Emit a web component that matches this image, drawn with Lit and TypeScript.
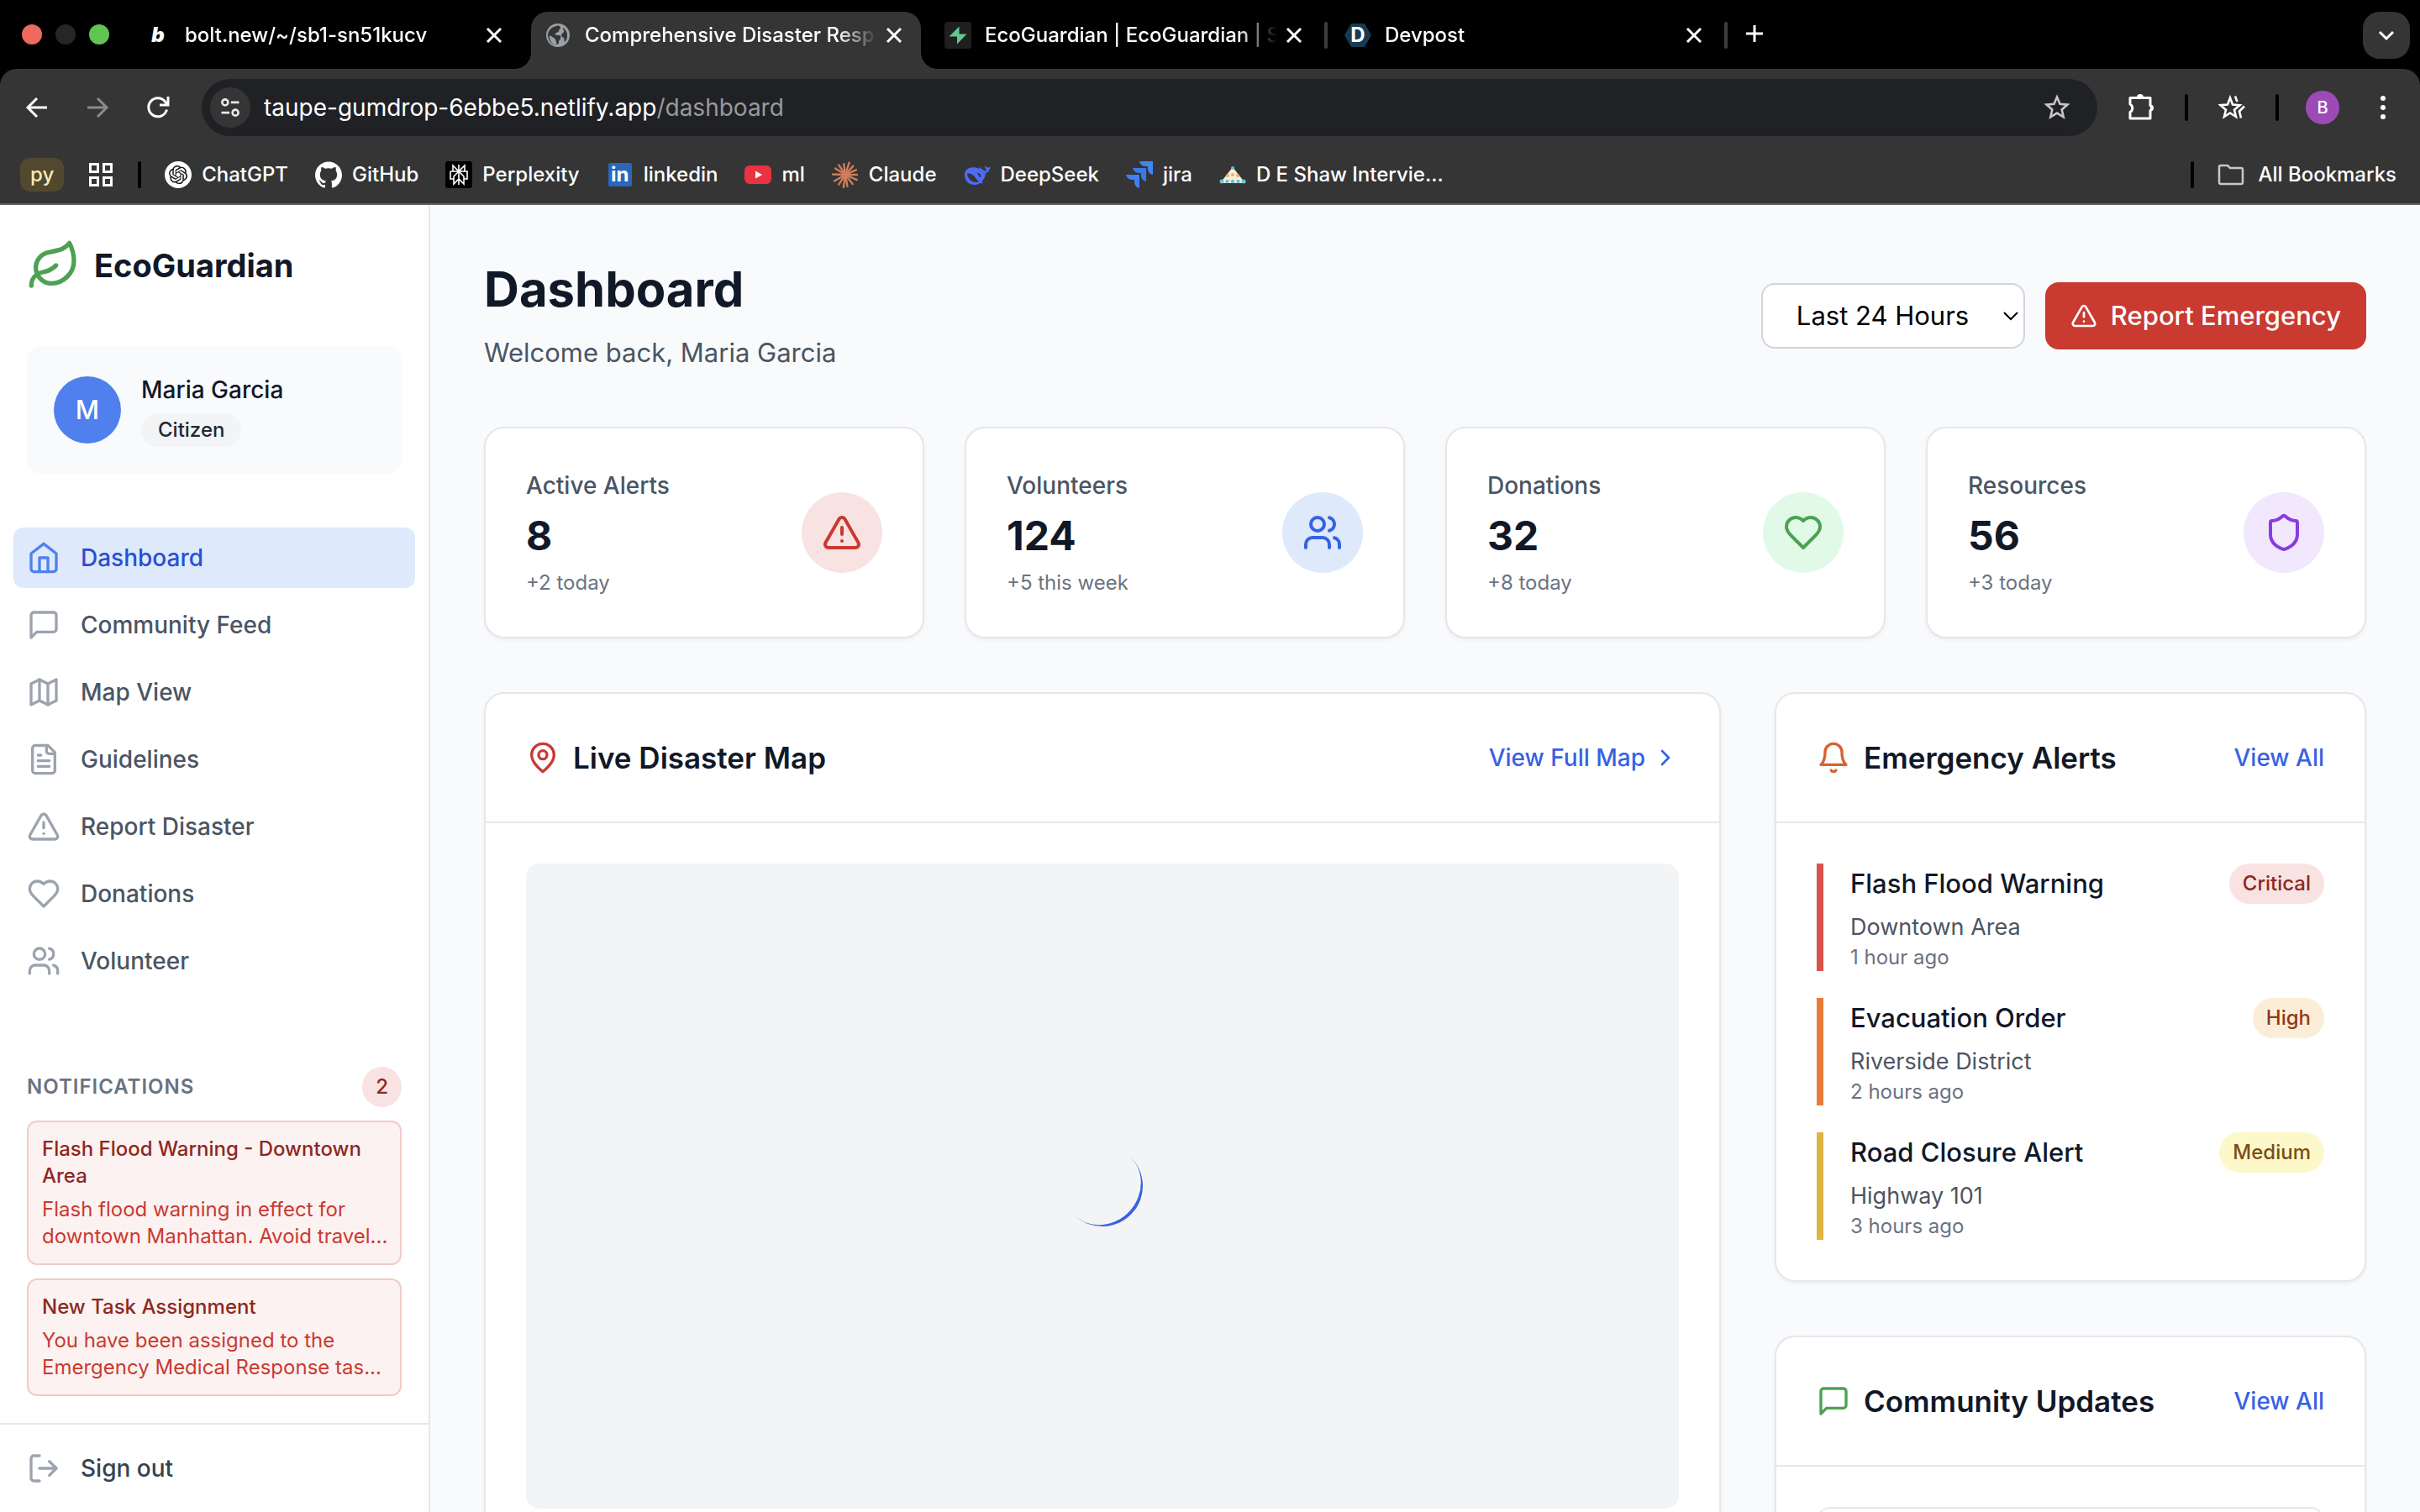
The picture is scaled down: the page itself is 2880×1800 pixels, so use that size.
import { LitElement, html, svg, css, nothing, type TemplateResult } from "lit";
import { customElement, property } from "lit/decorators.js";
import { classMap } from "lit/directives/class-map.js";

/* ---------- shared styles ---------- */

const base = css`
  :host,
  *,
  *::before,
  *::after {
    box-sizing: border-box;
  }
  h1,
  h2,
  h3,
  p,
  ul {
    margin: 0;
    padding: 0;
  }
  ul {
    list-style: none;
  }
  a {
    color: inherit;
    text-decoration: none;
  }
  button,
  input,
  select {
    margin: 0;
    padding: 0;
    border: 0;
    background: none;
    color: inherit;
    font: inherit;
  }
  button,
  select {
    cursor: pointer;
  }
`;

/* ---------- outline icons on a 24 unit grid ---------- */

const outlines: Record<string, TemplateResult> = {
  leaf: svg`<path d="M11 20A7 7 0 0 1 9.8 6.1C15.5 5 17 4.48 19 2c1 2 2 4.18 2 8 0 5.5-4.78 10-10 10Z"/><path d="M2 21c0-3 1.85-5.36 5.08-6C9.5 14.52 12 13 13 12"/>`,
  home: svg`<path d="m3 9 9-7 9 7v11a2 2 0 0 1-2 2H5a2 2 0 0 1-2-2z"/><path d="M9 22V12h6v10"/>`,
  message: svg`<path d="M21 15a2 2 0 0 1-2 2H7l-4 4V5a2 2 0 0 1 2-2h14a2 2 0 0 1 2 2z"/>`,
  map: svg`<path d="M3 6l6-3 6 3 6-3v15l-6 3-6-3-6 3z"/><path d="M9 3v15"/><path d="M15 6v15"/>`,
  file: svg`<path d="M15 2H6a2 2 0 0 0-2 2v16a2 2 0 0 0 2 2h12a2 2 0 0 0 2-2V7Z"/><path d="M14 2v4a2 2 0 0 0 2 2h4"/><path d="M10 9H8"/><path d="M16 13H8"/><path d="M16 17H8"/>`,
  alert: svg`<path d="m21.73 18-8-14a2 2 0 0 0-3.48 0l-8 14A2 2 0 0 0 4 21h16a2 2 0 0 0 1.73-3"/><path d="M12 9v4"/><path d="M12 17h.01"/>`,
  heart: svg`<path d="M19 14c1.49-1.46 3-3.21 3-5.5A5.5 5.5 0 0 0 16.5 3c-1.76 0-3 .5-4.5 2-1.5-1.5-2.74-2-4.5-2A5.5 5.5 0 0 0 2 8.5c0 2.3 1.5 4.05 3 5.5l7 7Z"/>`,
  users: svg`<path d="M16 21v-2a4 4 0 0 0-4-4H6a4 4 0 0 0-4 4v2"/><circle cx="9" cy="7" r="4"/><path d="M22 21v-2a4 4 0 0 0-3-3.87"/><path d="M16 3.13a4 4 0 0 1 0 7.75"/>`,
  logout: svg`<path d="M9 21H5a2 2 0 0 1-2-2V5a2 2 0 0 1 2-2h4"/><path d="m16 17 5-5-5-5"/><path d="M21 12H9"/>`,
  shield: svg`<path d="M20 13c0 5-3.5 7.5-7.66 8.95a1 1 0 0 1-.67-.01C7.5 20.5 4 18 4 13V6a1 1 0 0 1 1-1c2 0 4.5-1.2 6.24-2.72a1.17 1.17 0 0 1 1.52 0C14.51 3.81 17 5 19 5a1 1 0 0 1 1 1z"/>`,
  pin: svg`<path d="M20 10c0 6-8 12-8 12s-8-6-8-12a8 8 0 0 1 16 0Z"/><circle cx="12" cy="10" r="3"/>`,
  bell: svg`<path d="M6 8a6 6 0 0 1 12 0c0 7 3 9 3 9H3s3-2 3-9"/><path d="M10.3 21a1.94 1.94 0 0 0 3.4 0"/>`,
  chevron: svg`<path d="m9 18 6-6-6-6"/>`,
};

@customElement("line-icon")
export class LineIcon extends LitElement {
  @property() name = "";

  static styles = css`
    :host {
      display: block;
      flex: none;
      width: 40px;
      height: 40px;
    }
    svg {
      display: block;
      width: 100%;
      height: 100%;
      fill: none;
      stroke: currentColor;
      stroke-width: 2;
      stroke-linecap: round;
      stroke-linejoin: round;
    }
  `;

  render() {
    return html`<svg viewBox="0 0 24 24" aria-hidden="true">${outlines[this.name] ?? nothing}</svg>`;
  }
}

/* ---------- site logos on a 32 unit grid ---------- */

const rays = [
  [0, 14], [24, 15], [52, 14], [80, 14], [98, 15], [124, 14], [150, 15],
  [182, 15], [212, 14], [236, 14], [262, 13], [288, 15], [312, 14], [336, 14],
];

const logos: Record<string, TemplateResult> = {
  globe: svg`<circle cx="16" cy="16" r="14" fill="#9aa0a6"/>
    <path fill="#353535" d="M14 5c3-1 5 0 5 2s-2 2-2 4-3 1-4 3 2 2 4 2 3 2 2 4-2 2-2 4-1 3-2 3-1-4-2-6-4-3-7-5c-1 7 4 12 10 12C8 28 4 22 4 15c1-6 5-9 10-10z"/>
    <path fill="#353535" d="M22 7c3 2 5 5 5 9s-1 6-3 8c-1-2 0-4-1-5s-3-1-3-3 2-2 3-4-2-3-1-5z"/>`,
  supabase: svg`<rect width="32" height="32" rx="4" fill="#1f1f1f"/><path fill="#64c68e" d="M17.500 5.500v9H26.500L15 26.500v-9H5.500z"/>`,
  hexagon: svg`<path fill="#173a52" d="M8 2h16l8 14-8 14H8L0 16z"/>`,
  openai: svg`<circle cx="16" cy="16" r="16" fill="#fff"/><path transform="translate(5 5) scale(.92)" fill="#111" d="M22.2819 9.8211a5.9847 5.9847 0 0 0-.5157-4.9108 6.0462 6.0462 0 0 0-6.5098-2.9A6.0651 6.0651 0 0 0 4.9807 4.1818a5.9847 5.9847 0 0 0-3.9977 2.9 6.0462 6.0462 0 0 0 .7427 7.0966 5.98 5.98 0 0 0 .511 4.9107 6.051 6.051 0 0 0 6.5146 2.9001A5.9847 5.9847 0 0 0 13.2599 24a6.0557 6.0557 0 0 0 5.7718-4.2058 5.9894 5.9894 0 0 0 3.9977-2.9001 6.0557 6.0557 0 0 0-.7475-7.0729zm-9.022 12.6081a4.4755 4.4755 0 0 1-2.8764-1.0408l.1419-.0804 4.7783-2.7582a.7948.7948 0 0 0 .3927-.6813v-6.7369l2.02 1.1686a.071.071 0 0 1 .038.052v5.5826a4.504 4.504 0 0 1-4.4945 4.4944zm-9.6607-4.1254a4.4708 4.4708 0 0 1-.5346-3.0137l.142.0852 4.783 2.7582a.7712.7712 0 0 0 .7806 0l5.8428-3.3685v2.3324a.0804.0804 0 0 1-.0332.0615L9.74 19.9502a4.4992 4.4992 0 0 1-6.1408-1.6464zM2.3408 7.8956a4.485 4.485 0 0 1 2.3655-1.9728V11.6a.7664.7664 0 0 0 .3879.6765l5.8144 3.3543-2.0201 1.1685a.0757.0757 0 0 1-.071 0l-4.8303-2.7865A4.504 4.504 0 0 1 2.3408 7.872zm16.5963 3.8558L13.1038 8.364 15.1192 7.2a.0757.0757 0 0 1 .071 0l4.8303 2.7913a4.4944 4.4944 0 0 1-.6765 8.1042v-5.6772a.79.79 0 0 0-.407-.667zm2.0107-3.0231l-.142-.0852-4.7735-2.7818a.7759.7759 0 0 0-.7854 0L9.409 9.2297V6.8974a.0662.0662 0 0 1 .0284-.0615l4.8303-2.7866a4.4992 4.4992 0 0 1 6.6802 4.66zM8.3065 12.863l-2.02-1.1638a.0804.0804 0 0 1-.038-.0567V6.0742a4.4992 4.4992 0 0 1 7.3757-3.4537l-.142.0805L8.704 5.459a.7948.7948 0 0 0-.3927.6813zm1.0976-2.3654l2.602-1.4998 2.6069 1.4998v2.9994l-2.5974 1.4997-2.6067-1.4997Z"/>`,
  github: svg`<path transform="scale(1.3333)" fill="#fff" d="M12 .297c-6.63 0-12 5.373-12 12 0 5.303 3.438 9.8 8.205 11.385.6.113.82-.258.82-.577 0-.285-.01-1.04-.015-2.04-3.338.724-4.042-1.61-4.042-1.61C4.422 18.07 3.633 17.7 3.633 17.7c-1.087-.744.084-.729.084-.729 1.205.084 1.838 1.236 1.838 1.236 1.07 1.835 2.809 1.305 3.495.998.108-.776.417-1.305.76-1.605-2.665-.3-5.466-1.332-5.466-5.93 0-1.31.465-2.38 1.235-3.22-.135-.303-.54-1.523.105-3.176 0 0 1.005-.322 3.3 1.23.96-.267 1.98-.399 3-.405 1.02.006 2.04.138 3 .405 2.28-1.552 3.285-1.23 3.285-1.23.645 1.653.24 2.873.12 3.176.765.84 1.23 1.91 1.23 3.22 0 4.61-2.805 5.625-5.475 5.92.42.36.81 1.096.81 2.22 0 1.606-.015 2.896-.015 3.286 0 .315.21.69.825.57C20.565 22.092 24 17.592 24 12.297c0-6.627-5.373-12-12-12"/>`,
  perplexity: svg`<rect width="32" height="32" rx="3" fill="#000"/><g fill="none" stroke="#fff" stroke-width="1.6"><path d="M16 4v24M9 5l7 7 7-7v7H9zM6 12h20v9h-4M10 21H6v-9M16 12l-6 6v9l6-6 6 6v-9z"/></g>`,
  linkedin: svg`<rect x="2" y="2" width="28" height="28" rx="2" fill="#2a66bc"/>`,
  youtube: svg`<rect y="5" width="32" height="22" rx="6" fill="#ea3340"/><path d="M13 11.500v9l8-4.500z" fill="#fff"/>`,
  claude: svg`<g stroke="#cf7c5e" stroke-width="2.400" stroke-linecap="round">${rays.map(
    ([deg, len]) => svg`<path d="M16 16h${len}" transform="rotate(${deg} 16 16)"/>`,
  )}</g>`,
  deepseek: svg`<path fill="#4f6bf6" d="M31.500 6.500c-.500-.3-1 .6-2.200.9-1.600.3-2.600-.6-3.300-1.800-.4-.7-.5 0-.6 1.100-.1 1.500.6 2.900 1.700 3.700-1 1.500-2.600 1.200-4.500-.3-1.900-1.500-2.600-1.700-3.600-3.400-.7.800-.300 1.800-.2 2.500C11.500 5.500 1 7 1 16.500 1 23.500 6.500 28 12.500 28c3.200 0 5-.8 7-2.200 1.100.700 2.500.6 3.700.2-.4-.9-1.200-1.100-1.900-1.700 2.700-2.700 4.300-6.300 4.600-10.300 3-.4 5.100-3.300 5.600-7.500z"/><path fill="#353535" d="M4 14.500c4-.5 7 1 9.500 4.500 1.500 2.200 2.500 4 4.500 5-5 2.500-13.500-.5-14-9.500z"/><path fill="#353535" d="M15.500 13.500c3 .3 5 2 5 4.500l-1.500 1.500c-1-2.500-2-4-3.500-6z"/>`,
  jira: svg`<path fill="#4385f6" d="M16 0h16v16a7 7 0 0 1-6-7V6h-3a7 7 0 0 1-7-6z"/><path fill="#3a78ea" d="M8 8h16v16a7 7 0 0 1-6-7v-3h-3a7 7 0 0 1-7-6z"/><path fill="#3f80f3" d="M0 16h16v16a7 7 0 0 1-6-7v-3H7a7 7 0 0 1-7-6z"/>`,
  pyramid: svg`<path d="M16 7 31 26H1z" fill="#f4efe2"/><g fill="#6fc4c9"><circle cx="16" cy="8" r="2"/><circle cx="3" cy="24" r="2.500"/><circle cx="9.500" cy="24" r="2.200"/><circle cx="16" cy="24" r="2.200"/><circle cx="22.500" cy="24" r="2.200"/><circle cx="29" cy="24" r="2.500"/></g><g fill="#eeae5a"><circle cx="10" cy="17" r="2"/><circle cx="16" cy="16" r="2"/><circle cx="22" cy="17" r="2"/></g>`,
  grid: svg`<g fill="none" stroke="#fff" stroke-width="3"><path d="M3.500 3.500h9v9h-9zM19.500 3.500h9v9h-9zM3.500 19.500h9v9h-9zM19.500 19.500h9v9h-9z"/></g>`,
  folder: svg`<path d="M2 7a2 2 0 0 1 2-2h8l3 3h13a2 2 0 0 1 2 2v15a2 2 0 0 1-2 2H4a2 2 0 0 1-2-2z" fill="none" stroke="#c7c7c7" stroke-width="2.500"/>`,
  back: svg`<path d="M28 16H5M16 5 5 16l11 11" fill="none" stroke="currentColor" stroke-width="3"/>`,
  forward: svg`<path d="M4 16h23M16 5l11 11-11 11" fill="none" stroke="currentColor" stroke-width="3"/>`,
  reload: svg`<path d="M26.500 18.500A11 11 0 1 1 24.500 9L27 12" fill="none" stroke="#fff" stroke-width="3"/><path d="M28 3v10H18" fill="none" stroke="#fff" stroke-width="3"/>`,
  tune: svg`<g fill="none" stroke="#e8e8e8" stroke-width="3"><circle cx="9" cy="9" r="4"/><path d="M17 9h11M4 23h11"/><circle cx="23" cy="23" r="4"/></g>`,
  star: svg`<path d="m16 3.500 3.500 8.300 9 .8-6.800 5.900 2 8.800L16 22.600l-7.700 4.700 2-8.800-6.800-5.900 9-.8z" fill="none" stroke="#c7c7c7" stroke-width="2.600"/>`,
  puzzle: svg`<path d="M3 4.500h24v9a3.500 3.500 0 0 1 0 6v9.500H3v-7.500a5.500 5.500 0 0 0 0-9.500z" fill="none" stroke="#fff" stroke-width="3" stroke-linejoin="round"/><path d="M11 4a4 4 0 0 1 8 0zM27 12.500a4 4 0 0 1 0 8z" fill="#fff"/>`,
  starlines: svg`<g fill="none" stroke="#fff" stroke-width="2.600"><path d="m14 4.500 3 8 8.500.7-6.500 5.500 2 8.300-7-4.500L7 27l2-8.300-6.500-5.500 8.500-.7z"/><path d="M20 2.500 22.500 9M31 14.500l-6 6 2 8"/></g>`,
  close: svg`<path d="m8 8 16 16M24 8 8 24" fill="none" stroke="#fff" stroke-width="3"/>`,
  plus: svg`<path d="M16 6v20M6 16h20" fill="none" stroke="#fff" stroke-width="3"/>`,
  down: svg`<path d="m8 12 8 8 8-8" fill="none" stroke="currentColor" stroke-width="3"/>`,
  dots: svg`<g fill="#fff"><circle cx="16" cy="5" r="3"/><circle cx="16" cy="16" r="3"/><circle cx="16" cy="27" r="3"/></g>`,
};

@customElement("site-logo")
export class SiteLogo extends LitElement {
  @property() name = "";
  @property() mark = "";

  static styles = css`
    :host {
      display: grid;
      flex: none;
      place-items: center;
      width: 32px;
      height: 32px;
    }
    svg,
    .mark {
      grid-area: 1 / 1;
    }
    svg {
      display: block;
      width: 100%;
      height: 100%;
    }
    .mark {
      z-index: 1;
      color: #fff;
      font: 700 24px/28px Inter, sans-serif;
    }
    .italic {
      font-weight: 900;
      font-style: italic;
    }
  `;

  render() {
    const shape = logos[this.name];
    return html`
      ${shape ? html`<svg viewBox="0 0 32 32" aria-hidden="true">${shape}</svg>` : nothing}
      ${this.mark
        ? html`<span class=${classMap({ mark: true, italic: !shape })}>${this.mark}</span>`
        : nothing}
    `;
  }
}

/* ---------- browser frame ---------- */

interface Tab {
  title: string;
  logo: string;
  mark?: string;
  active?: boolean;
  divided?: boolean;
}

const tabs: Tab[] = [
  { title: "bolt.new/~/sb1-sn51kucv", logo: "", mark: "b" },
  { title: "Comprehensive Disaster Resp", logo: "globe", active: true },
  { title: "EcoGuardian | EcoGuardian | S", logo: "supabase", divided: true },
  { title: "Devpost", logo: "hexagon", mark: "D", divided: true },
];

const bookmarks = [
  { title: "ChatGPT", logo: "openai" },
  { title: "GitHub", logo: "github" },
  { title: "Perplexity", logo: "perplexity" },
  { title: "linkedin", logo: "linkedin", mark: "in" },
  { title: "ml", logo: "youtube" },
  { title: "Claude", logo: "claude" },
  { title: "DeepSeek", logo: "deepseek" },
  { title: "jira", logo: "jira" },
  { title: "D E Shaw Intervie...", logo: "pyramid" },
];

@customElement("browser-frame")
export class BrowserFrame extends LitElement {
  static styles = [
    base,
    css`
      :host {
        display: block;
        background: #000;
        color: #fff;
        font: 450 24px/32px Inter, "Liberation Sans", sans-serif;
      }
      .strip {
        display: flex;
        align-items: flex-end;
        height: 82px;
        padding: 14px 12px 0 26px;
      }
      .lights {
        display: flex;
        gap: 16px;
        align-self: center;
        width: 130px;
        padding-bottom: 14px;
      }
      .light {
        width: 24px;
        height: 24px;
        border-radius: 50%;
        background: #262626;
      }
      .light.red {
        background: #ec6a5e;
      }
      .light.green {
        background: #61c554;
      }
      .tabs {
        display: flex;
        gap: 12px;
      }
      .tab {
        position: relative;
        display: flex;
        align-items: center;
        gap: 16px;
        width: 464px;
        height: 68px;
        padding: 0 16px 12px;
      }
      .tab.active {
        border-radius: 20px 20px 0 0;
        background: #353535;
      }
      .tab.active::before,
      .tab.active::after {
        content: "";
        position: absolute;
        bottom: 0;
        width: 20px;
        height: 20px;
      }
      .tab.active::before {
        right: 100%;
        background: radial-gradient(circle at 0 0, transparent 20px, #353535 20px);
      }
      .tab.active::after {
        left: 100%;
        background: radial-gradient(circle at 100% 0, transparent 20px, #353535 20px);
      }
      .tab.divided::after {
        content: "";
        position: absolute;
        top: 12px;
        left: 100%;
        width: 4px;
        height: 32px;
        margin-left: 4px;
        border-radius: 2px;
        background: #3c3c3c;
      }
      .title {
        flex: 1;
        margin-right: -12px;
        overflow: hidden;
        white-space: nowrap;
        -webkit-mask-image: linear-gradient(to left, transparent, #000 48px);
        mask-image: linear-gradient(to left, transparent, #000 48px);
      }
      .icon-button {
        display: grid;
        flex: none;
        place-items: center;
        width: 32px;
        height: 32px;
      }
      .new-tab {
        margin: 0 auto 26px 24px;
      }
      .search-tabs {
        width: 56px;
        height: 56px;
        margin-bottom: 12px;
        border-radius: 20px;
        background: #353535;
      }
      .toolbar {
        display: flex;
        align-items: center;
        gap: 40px;
        padding: 12px 28px;
        border-radius: 20px 20px 0 0;
        background: #353535;
      }
      .dim {
        color: #8a8a8a;
      }
      .address {
        display: flex;
        flex: 1;
        align-items: center;
        height: 68px;
        margin-left: -4px;
        padding: 0 32px 0 10px;
        border-radius: 34px;
        background: #202125;
        font-size: 28px;
        line-height: 40px;
        font-weight: 400;
      }
      .tune {
        width: 48px;
        height: 48px;
        margin-right: 16px;
        border-radius: 50%;
        background: #353535;
      }
      .tune site-logo {
        width: 28px;
        height: 28px;
      }
      .address input {
        field-sizing: content;
        outline: 0;
      }
      .path {
        flex: 1;
        color: #9a9a9a;
      }
      .rule {
        flex: none;
        width: 4px;
        height: 32px;
        border-radius: 2px;
        background: #000;
      }
      .tools {
        display: flex;
        align-items: center;
        gap: 36px;
        margin-left: -4px;
      }
      .avatar {
        width: 40px;
        height: 40px;
        margin-left: -4px;
        border-radius: 50%;
        background: #9c4bb6;
        font-size: 20px;
      }
      .bookmarks {
        display: flex;
        align-items: center;
        gap: 28px;
        height: 70px;
        padding: 0 28px 0 24px;
        border-bottom: 2px solid #636163;
        background: #353535;
      }
      .group {
        padding: 4px 12px;
        border-radius: 12px;
        background: #51482f;
        color: #fbe9b4;
      }
      .sites {
        display: flex;
        gap: 32px;
      }
      .bookmark {
        display: flex;
        align-items: center;
        gap: 12px;
        white-space: nowrap;
      }
      .all {
        gap: 16px;
      }
      .push {
        margin-left: auto;
      }
    `,
  ];

  render() {
    return html`
      <div class="strip">
        <div class="lights">
          <span class="light red"></span><span class="light"></span><span class="light green"></span>
        </div>
        <div class="tabs">
          ${tabs.map(
            (t) => html`
              <div class=${classMap({ tab: true, active: !!t.active, divided: !!t.divided })}>
                <site-logo name=${t.logo} mark=${t.mark ?? ""}></site-logo>
                <span class="title">${t.title}</span>
                <button class="icon-button" aria-label="Close tab"><site-logo name="close"></site-logo></button>
              </div>
            `,
          )}
        </div>
        <button class="icon-button new-tab" aria-label="New tab"><site-logo name="plus"></site-logo></button>
        <button class="icon-button search-tabs" aria-label="Search tabs"><site-logo name="down"></site-logo></button>
      </div>
      <div class="toolbar">
        <button class="icon-button" aria-label="Back"><site-logo name="back"></site-logo></button>
        <button class="icon-button dim" aria-label="Forward"><site-logo name="forward"></site-logo></button>
        <button class="icon-button" aria-label="Reload"><site-logo name="reload"></site-logo></button>
        <div class="address">
          <button class="icon-button tune" aria-label="Site information"><site-logo name="tune"></site-logo></button>
          <input type="text" aria-label="Address" .value=${"taupe-gumdrop-6ebbe5.netlify.app"} />
          <span class="path">/dashboard</span>
          <button class="icon-button" aria-label="Bookmark this page"><site-logo name="star"></site-logo></button>
        </div>
        <div class="tools">
          <button class="icon-button" aria-label="Extensions"><site-logo name="puzzle"></site-logo></button>
          <span class="rule"></span>
          <button class="icon-button" aria-label="Favourites"><site-logo name="starlines"></site-logo></button>
          <span class="rule"></span>
          <button class="icon-button avatar" aria-label="Profile">B</button>
          <button class="icon-button" aria-label="Menu"><site-logo name="dots"></site-logo></button>
        </div>
      </div>
      <nav class="bookmarks" aria-label="Bookmarks">
        <button class="group">py</button>
        <button class="icon-button" aria-label="Apps"><site-logo name="grid"></site-logo></button>
        <span class="rule"></span>
        <div class="sites">
          ${bookmarks.map(
            (b) => html`
              <a class="bookmark" href="#"><site-logo name=${b.logo} mark=${b.mark ?? ""}></site-logo>${b.title}</a>
            `,
          )}
        </div>
        <span class="rule push"></span>
        <a class="bookmark all" href="#"><site-logo name="folder"></site-logo>All Bookmarks</a>
      </nav>
    `;
  }
}

/* ---------- sidebar ---------- */

const links = [
  { label: "Dashboard", icon: "home", active: true },
  { label: "Community Feed", icon: "message" },
  { label: "Map View", icon: "map" },
  { label: "Guidelines", icon: "file" },
  { label: "Report Disaster", icon: "alert" },
  { label: "Donations", icon: "heart" },
  { label: "Volunteer", icon: "users" },
];

const notices = [
  {
    title: "Flash Flood Warning - Downtown Area",
    body: "Flash flood warning in effect for downtown Manhattan. Avoid travel...",
  },
  {
    title: "New Task Assignment",
    body: "You have been assigned to the Emergency Medical Response tas...",
  },
];

@customElement("side-bar")
export class SideBar extends LitElement {
  static styles = [
    base,
    css`
      :host {
        display: flex;
        flex: none;
        flex-direction: column;
        width: 512px;
        border-right: 2px solid #e5e7eb;
        background: #fff;
        color: #111827;
        font: 500 28px/40px Inter, "Liberation Sans", sans-serif;
      }
      .brand {
        display: flex;
        align-items: center;
        gap: 16px;
        padding: 40px 32px 64px;
        font-size: 38px;
        line-height: 64px;
        font-weight: 700;
      }
      .brand line-icon {
        width: 64px;
        height: 64px;
        color: #4da153;
      }
      .user {
        display: flex;
        align-items: center;
        gap: 24px;
        margin: 0 32px 64px;
        padding: 32px;
        border-radius: 16px;
        background: #f9fafc;
      }
      .avatar {
        display: grid;
        place-items: center;
        width: 80px;
        height: 80px;
        border-radius: 50%;
        background: #4f80ee;
        color: #fff;
        font-size: 31px;
      }
      .who {
        display: flex;
        flex-direction: column;
        align-items: flex-start;
        gap: 8px;
      }
      .role {
        padding: 4px 20px;
        border-radius: 20px;
        background: #f3f4f6;
        color: #1f2937;
        font-size: 24px;
        line-height: 32px;
      }
      .links {
        display: flex;
        flex-direction: column;
        gap: 8px;
        padding: 0 16px;
        color: #4b5563;
      }
      .link {
        display: flex;
        align-items: center;
        gap: 24px;
        padding: 16px;
        border-radius: 12px;
      }
      line-icon {
        color: #9ca3af;
      }
      .link.active {
        background: #dee9fb;
        color: #2a4fcf;
      }
      .link.active line-icon {
        color: #4f80ee;
      }
      .notices {
        display: flex;
        flex-direction: column;
        gap: 16px;
        margin-top: auto;
        padding: 0 32px 32px;
        font-size: 24px;
        line-height: 32px;
      }
      .heading {
        display: flex;
        align-items: center;
        justify-content: space-between;
      }
      .heading h2 {
        color: #6b7280;
        font-size: 24px;
        font-weight: 600;
        letter-spacing: 1px;
      }
      .count {
        padding: 8px 16px;
        border-radius: 24px;
        background: #f8e3e2;
        color: #8c2822;
      }
      .notice {
        display: flex;
        flex-direction: column;
        gap: 8px;
        padding: 16px 12px 16px 16px;
        border: 2px solid #f4cac8;
        border-radius: 12px;
        background: #fcf2f1;
        color: #8c2822;
      }
      .notice h3 {
        font: inherit;
      }
      .notice p {
        color: #c93a31;
        font-weight: 400;
      }
      .footer {
        padding: 32px 16px;
        border-top: 2px solid #e5e7eb;
      }
      .sign-out {
        display: flex;
        align-items: center;
        gap: 24px;
        width: 100%;
        padding: 0 16px;
        color: #374151;
      }
    `,
  ];

  render() {
    return html`
      <a class="brand" href="#"><line-icon name="leaf"></line-icon>EcoGuardian</a>
      <section class="user">
        <span class="avatar">M</span>
        <div class="who">
          <span>Maria Garcia</span>
          <span class="role">Citizen</span>
        </div>
      </section>
      <nav class="links">
        ${links.map(
          (l) => html`
            <a class=${classMap({ link: true, active: !!l.active })} href="#">
              <line-icon name=${l.icon}></line-icon>${l.label}
            </a>
          `,
        )}
      </nav>
      <section class="notices">
        <div class="heading">
          <h2>NOTIFICATIONS</h2>
          <span class="count">${notices.length}</span>
        </div>
        ${notices.map(
          (n) => html`
            <article class="notice">
              <h3>${n.title}</h3>
              <p>${n.body}</p>
            </article>
          `,
        )}
      </section>
      <div class="footer">
        <button class="sign-out"><line-icon name="logout"></line-icon>Sign out</button>
      </div>
    `;
  }
}

/* ---------- dashboard ---------- */

const stats = [
  { label: "Active Alerts", value: "8", note: "+2 today", icon: "alert", tone: "red" },
  { label: "Volunteers", value: "124", note: "+5 this week", icon: "users", tone: "blue" },
  { label: "Donations", value: "32", note: "+8 today", icon: "heart", tone: "green" },
  { label: "Resources", value: "56", note: "+3 today", icon: "shield", tone: "purple" },
];

const alerts = [
  { title: "Flash Flood Warning", place: "Downtown Area", time: "1 hour ago", level: "Critical" },
  { title: "Evacuation Order", place: "Riverside District", time: "2 hours ago", level: "High" },
  { title: "Road Closure Alert", place: "Highway 101", time: "3 hours ago", level: "Medium" },
];

@customElement("dashboard-page")
export class DashboardPage extends LitElement {
  static styles = [
    base,
    css`
      :host {
        display: flex;
        flex: 1;
        flex-direction: column;
        gap: 64px;
        min-width: 0;
        padding: 64px;
        overflow: hidden;
        background: #f9fafc;
        color: #111827;
        font: 400 28px/40px Inter, "Liberation Sans", sans-serif;
      }
      .top {
        display: flex;
        align-items: center;
        justify-content: space-between;
      }
      h1 {
        margin-bottom: 16px;
        font-size: 58px;
        line-height: 72px;
        font-weight: 700;
      }
      .welcome {
        color: #4b5563;
        font-size: 31px;
        line-height: 48px;
      }
      .actions {
        display: flex;
        align-items: center;
        gap: 24px;
        font-size: 31px;
        line-height: 48px;
      }
      .range {
        display: grid;
        align-items: center;
        justify-items: end;
      }
      .range select,
      .range svg {
        grid-area: 1 / 1;
      }
      .range select {
        appearance: none;
        height: 78px;
        padding: 0 64px 0 40px;
        border: 2px solid #d1d5db;
        border-radius: 16px;
        background: #fff;
        color: #000;
      }
      .range svg {
        z-index: 1;
        width: 18px;
        height: 12px;
        margin-right: 8px;
        fill: none;
        stroke: #000;
        stroke-width: 2;
        pointer-events: none;
      }
      .report {
        display: flex;
        align-items: center;
        gap: 16px;
        padding: 16px 30px;
        border-radius: 16px;
        background: #c93a31;
        color: #fff;
        font-weight: 500;
      }
      .report line-icon,
      .more line-icon {
        width: 32px;
        height: 32px;
      }
      .card {
        border: 2px solid #e5e7eb;
        border-radius: 24px;
        background: #fff;
        box-shadow: 0 2px 4px rgb(0 0 0 / 5%);
      }
      .stats {
        display: grid;
        grid-template-columns: repeat(4, 1fr);
        gap: 48px;
      }
      .stat {
        display: flex;
        align-items: center;
        justify-content: space-between;
        padding: 48px;
      }
      .label {
        color: #4b5563;
        font-weight: 500;
      }
      .value {
        margin: 8px 0;
        font-size: 48px;
        line-height: 64px;
        font-weight: 700;
      }
      .note {
        color: #6b7280;
        font-size: 24px;
        line-height: 32px;
      }
      .disc {
        display: grid;
        place-items: center;
        width: 96px;
        height: 96px;
        border-radius: 50%;
      }
      .disc line-icon {
        width: 48px;
        height: 48px;
      }
      .disc.red {
        background: #f8e3e2;
        color: #c93a31;
      }
      .disc.blue {
        background: #dee9fb;
        color: #3662e3;
      }
      .disc.green {
        background: #e1fae8;
        color: #4da153;
      }
      .disc.purple {
        background: #f1e8fd;
        color: #8a3be0;
      }
      .panels {
        display: grid;
        grid-template-columns: repeat(3, 1fr);
        align-items: start;
        gap: 64px;
      }
      .wide {
        grid-column: span 2;
      }
      .column {
        display: flex;
        flex-direction: column;
        gap: 64px;
      }
      .head {
        display: flex;
        align-items: center;
        justify-content: space-between;
        padding: 48px;
        border-bottom: 2px solid #e5e7eb;
      }
      .head h2 {
        display: flex;
        align-items: center;
        gap: 16px;
        font-size: 35px;
        line-height: 56px;
        font-weight: 600;
      }
      .pin {
        color: #c93a31;
      }
      .bell {
        color: #d9622b;
      }
      .talk {
        color: #4da153;
      }
      .more {
        display: flex;
        align-items: center;
        gap: 8px;
        color: #3662e3;
        font-weight: 500;
      }
      .body {
        padding: 48px;
      }
      .map {
        display: grid;
        place-items: center;
        height: 768px;
        border-radius: 16px;
        background: #f3f4f6;
      }
      .spinner {
        width: 96px;
        height: 96px;
        border-bottom: 4px solid #3662e3;
        border-radius: 50%;
        rotate: -48deg;
      }
      .alerts {
        display: flex;
        flex-direction: column;
        gap: 32px;
      }
      .alert {
        display: flex;
        align-items: flex-start;
        justify-content: space-between;
        padding-left: 32px;
        border-left: 8px solid #db524c;
      }
      .alert h3 {
        margin-bottom: 8px;
        font-size: 31px;
        line-height: 48px;
        font-weight: 500;
      }
      .place {
        color: #4b5563;
        font-size: 27px;
      }
      .level {
        padding: 8px 16px;
        border-radius: 24px;
        background: #f8e3e2;
        color: #8c2822;
        font-size: 24px;
        line-height: 32px;
        font-weight: 500;
      }
      .alert.high {
        border-color: #e77c38;
      }
      .high .level {
        background: #fcedd8;
        color: #8f391b;
      }
      .alert.medium {
        border-color: #e0b440;
      }
      .medium .level {
        background: #fdf8c9;
        color: #7c4d18;
      }
      .post {
        height: 200px;
        border: 2px solid #e5e7eb;
        border-radius: 16px;
      }
    `,
  ];

  render() {
    return html`
      <header class="top">
        <div>
          <h1>Dashboard</h1>
          <p class="welcome">Welcome back, Maria Garcia</p>
        </div>
        <div class="actions">
          <div class="range">
            <select aria-label="Time range">
              <option>Last 24 Hours</option>
            </select>
            <svg viewBox="0 0 18 12" aria-hidden="true"><path d="m1 2 8 8 8-8" /></svg>
          </div>
          <button class="report"><line-icon name="alert"></line-icon>Report Emergency</button>
        </div>
      </header>

      <section class="stats">
        ${stats.map(
          (s) => html`
            <article class="card stat">
              <div>
                <p class="label">${s.label}</p>
                <p class="value">${s.value}</p>
                <p class="note">${s.note}</p>
              </div>
              <span class="disc ${s.tone}"><line-icon name=${s.icon}></line-icon></span>
            </article>
          `,
        )}
      </section>

      <div class="panels">
        <section class="card wide">
          <div class="head">
            <h2><line-icon class="pin" name="pin"></line-icon>Live Disaster Map</h2>
            <a class="more" href="#">View Full Map<line-icon name="chevron"></line-icon></a>
          </div>
          <div class="body">
            <div class="map"><span class="spinner"></span></div>
          </div>
        </section>

        <div class="column">
          <section class="card">
            <div class="head">
              <h2><line-icon class="bell" name="bell"></line-icon>Emergency Alerts</h2>
              <a class="more" href="#">View All</a>
            </div>
            <ul class="body alerts">
              ${alerts.map(
                (a) => html`
                  <li class="alert ${a.level.toLowerCase()}">
                    <div>
                      <h3>${a.title}</h3>
                      <p class="place">${a.place}</p>
                      <p class="note">${a.time}</p>
                    </div>
                    <span class="level">${a.level}</span>
                  </li>
                `,
              )}
            </ul>
          </section>

          <section class="card">
            <div class="head">
              <h2><line-icon class="talk" name="message"></line-icon>Community Updates</h2>
              <a class="more" href="#">View All</a>
            </div>
            <div class="body"><div class="post"></div></div>
          </section>
        </div>
      </div>
    `;
  }
}

/* ---------- root ---------- */

@customElement("app-root")
export class AppRoot extends LitElement {
  static styles = css`
    :host {
      display: flex;
      flex-direction: column;
      height: 100vh;
      overflow: hidden;
    }
    .page {
      display: flex;
      flex: 1;
      min-height: 0;
    }
  `;

  render() {
    return html`
      <browser-frame></browser-frame>
      <div class="page">
        <side-bar></side-bar>
        <dashboard-page></dashboard-page>
      </div>
    `;
  }
}
